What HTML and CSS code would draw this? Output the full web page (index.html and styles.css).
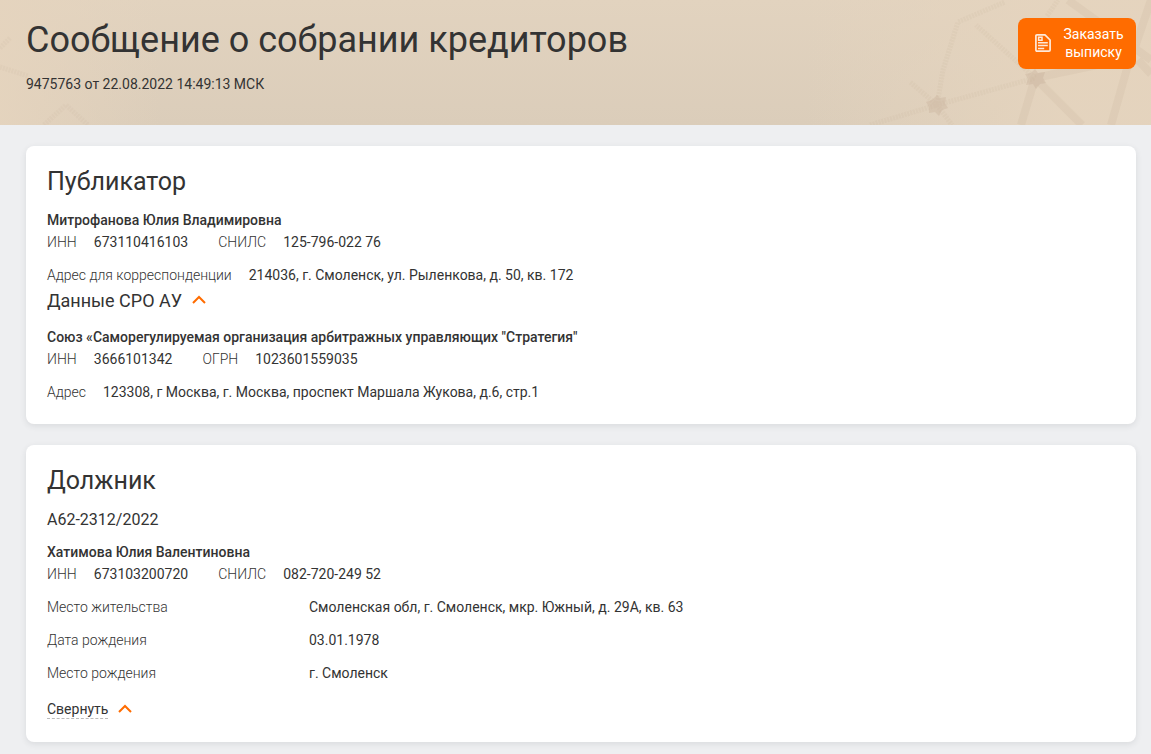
FILE: index.html
```html
<!DOCTYPE html>
<html lang="ru">
<head>
<meta charset="utf-8">
<meta name="viewport" content="width=device-width, initial-scale=1">
<title>Сообщение о собрании кредиторов</title>
<link rel="stylesheet" href="styles.css">
</head>
<body>
<header class="page-header">
  <svg class="header-art header-art-left" width="120" height="125" viewBox="0 0 120 125" aria-hidden="true">
    <g fill="none" stroke="#c9b49e" stroke-opacity=".14" stroke-width="5" stroke-dasharray="2 1">
      <path d="M0 67L28 76M44 125L66 105L88 125M0 48L10 38"/>
    </g>
  </svg>
  <svg class="header-art header-art-right" width="351" height="125" viewBox="0 0 351 125" aria-hidden="true">
    <g fill="none" stroke="#c8b29b">
      <path stroke-opacity=".16" stroke-width="5" stroke-dasharray="2 1" d="M70 125L137 105L143 70L158 22L205 2M137 105L235 78M137 105L110 82M137 105L152 125M235 78L176 25M247 16L258 0"/>
      <path stroke-opacity=".2" stroke-width="8" d="M268 0L351 60M235 78L221 125M235 78L282 125M235 78L330 58M330 58L311 125M334 50L351 0M338 60L351 74"/>
    </g>
    <g fill="#c3ab96" fill-opacity=".32">
      <path d="M137 95l3 3 6-1-1 6 3 5-6 2-3 6-4-4-6 1 0-6-3-5 6-2zM235 69l3 4 7-1-2 6 3 5-6 1-4 5-3-5-7 1 2-6-3-5 6-1z"/>
    </g>
  </svg>
  <div class="header-text">
    <h1 class="page-title">Сообщение о собрании кредиторов</h1>
    <p class="page-meta">9475763 от 22.08.2022 14:49:13 МСК</p>
  </div>
  <button class="order-button" type="button">
    <svg width="16" height="18" viewBox="0 0 16 18" fill="none" stroke="#fff" stroke-opacity=".85" aria-hidden="true">
      <path stroke-width="1.7" stroke-linejoin="round" d="M2 .9H10L15.1 6V16Q15.1 17.1 14 17.1H2Q.9 17.1 .9 16V2Q.9 .9 2 .9Z"/>
      <path stroke-width="1.5" d="M3.6 3.2H7V6.3H3.6ZM3 8.7H12.8M3 11.5H12.8M3 14.4H9.2"/>
    </svg>
    <span class="order-label">Заказать выписку</span>
  </button>
</header>

<main class="content">
  <section class="card">
    <h2 class="card-title">Публикатор</h2>
    <p class="name">Митрофанова Юлия Владимировна</p>
    <dl class="facts">
      <div class="fact"><dt>ИНН</dt><dd>673110416103</dd></div>
      <div class="fact"><dt>СНИЛС</dt><dd>125-796-022 76</dd></div>
    </dl>
    <dl class="facts facts-spaced">
      <div class="fact"><dt>Адрес для корреспонденции</dt><dd>214036, г. Смоленск, ул. Рыленкова, д. 50, кв. 172</dd></div>
    </dl>
    <h3 class="section-title">
      <button class="section-toggle" type="button" aria-expanded="true">Данные СРО АУ
        <svg class="chevron" width="14" height="9" viewBox="0 0 14 9" aria-hidden="true"><path d="M1 8L7 2L13 8"/></svg>
      </button>
    </h3>
    <p class="name name-sro">Союз «Саморегулируемая организация арбитражных управляющих "Стратегия"</p>
    <dl class="facts">
      <div class="fact"><dt>ИНН</dt><dd>3666101342</dd></div>
      <div class="fact"><dt>ОГРН</dt><dd>1023601559035</dd></div>
    </dl>
    <dl class="facts facts-spaced">
      <div class="fact"><dt>Адрес</dt><dd>123308, г Москва, г. Москва, проспект Маршала Жукова, д.6, стр.1</dd></div>
    </dl>
  </section>

  <section class="card">
    <h2 class="card-title">Должник</h2>
    <p class="case-number">А62-2312/2022</p>
    <p class="name">Хатимова Юлия Валентиновна</p>
    <dl class="facts">
      <div class="fact"><dt>ИНН</dt><dd>673103200720</dd></div>
      <div class="fact"><dt>СНИЛС</dt><dd>082-720-249 52</dd></div>
    </dl>
    <dl class="details">
      <dt>Место жительства</dt><dd>Смоленская обл, г. Смоленск, мкр. Южный, д. 29А, кв. 63</dd>
      <dt>Дата рождения</dt><dd>03.01.1978</dd>
      <dt>Место рождения</dt><dd>г. Смоленск</dd>
    </dl>
    <button class="collapse" type="button" aria-expanded="true">
      <span class="collapse-label">Свернуть</span>
      <svg class="chevron" width="14" height="9" viewBox="0 0 14 9" aria-hidden="true"><path d="M1 8L7 2L13 8"/></svg>
    </button>
  </section>
</main>
</body>
</html>
```
FILE: styles.css
```css
* {
  box-sizing: border-box;
}

body {
  margin: 0;
  background: #eeeff1;
  color: #333;
  font-family: Roboto, "Liberation Sans", sans-serif;
  font-size: 14px;
  line-height: 22px;
}

h1, h2, h3, p, dl, dd {
  margin: 0;
}

button {
  padding: 0;
  border: 0;
  background: none;
  color: inherit;
  font: inherit;
  cursor: pointer;
}

.page-header {
  position: relative;
  display: flex;
  justify-content: space-between;
  align-items: flex-start;
  padding: 18px 15px 30px 26px;
  background:
    linear-gradient(90deg, rgba(229, 212, 190, .9), rgba(229, 212, 190, 0) 14%, rgba(229, 212, 190, 0) 70%, rgba(229, 212, 190, .9) 92%),
    linear-gradient(#e2d3bf, #dbcdba);
}

.header-art {
  position: absolute;
  top: 0;
}

.header-art-left {
  left: 0;
}

.header-art-right {
  right: 0;
}

.header-text,
.order-button {
  position: relative;
}

.page-title {
  font-size: 36px;
  font-weight: 400;
  line-height: 44px;
}

.page-meta {
  margin-top: 11px;
}

.order-button {
  display: flex;
  align-items: center;
  gap: 10px;
  padding: 7px 10px 8px 17px;
  border-radius: 8px;
  background: #ff6c00;
  color: #fff;
  line-height: 18px;
}

.order-label {
  width: 65px;
}

.content {
  display: grid;
  gap: 21px;
  padding: 21px 15px 12px 26px;
}

.card {
  padding: 21px;
  border-radius: 8px;
  background: #fff;
  box-shadow: 0 2px 6px rgba(40, 45, 60, .1);
}

.card-title {
  margin-bottom: 12px;
  font-size: 25px;
  font-weight: 400;
  line-height: 30px;
}

.name {
  font-weight: 500;
}

.name-sro {
  margin-top: 10px;
}

.case-number {
  margin-bottom: 9px;
  font-size: 16px;
  line-height: 24px;
}

.facts {
  display: flex;
  flex-wrap: wrap;
  column-gap: 30px;
}

.facts-spaced {
  margin-top: 11px;
}

.fact {
  display: flex;
  gap: 17px;
}

dt {
  font-weight: 300;
}

.details {
  display: grid;
  grid-template-columns: 262px 1fr;
  row-gap: 11px;
  margin-top: 11px;
}

.section-title {
  font-size: 18px;
  font-weight: 400;
  line-height: 30px;
}

.section-toggle {
  display: flex;
  align-items: center;
  gap: 10px;
}

.collapse {
  display: flex;
  align-items: center;
  gap: 10px;
  margin: 16px 0 2px;
}

.collapse-label {
  border-bottom: 1px dashed #bbb;
  line-height: 18px;
}

.chevron {
  margin-bottom: 3px;
  fill: none;
  stroke: #ff6c00;
  stroke-width: 2;
}
```
